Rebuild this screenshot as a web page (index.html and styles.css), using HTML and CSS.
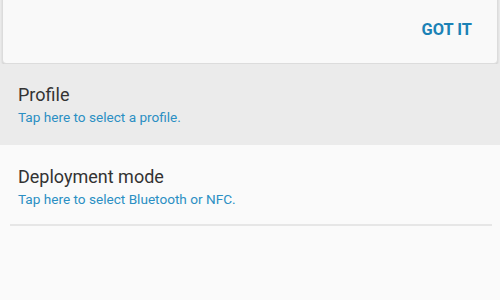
FILE: index.html
```
<!DOCTYPE html>
<html>
<head>
<meta charset="UTF-8">
<title>Settings</title>
<link rel="stylesheet" href="styles.css">
</head>
<body>
	<div class="top-area">
		<div class="tip-card">
			<div class="tip-actions">
				<span class="tip-button">GOT IT</span>
			</div>
		</div>
		<div class="pref-item pref-item-pressed">
			<div class="pref-title">Profile</div>
			<div class="pref-summary">Tap here to select a profile.</div>
		</div>
	</div>
	<div class="pref-item">
		<div class="pref-title">Deployment mode</div>
		<div class="pref-summary">Tap here to select Bluetooth or NFC.</div>
	</div>
	<div class="pref-divider"></div>
</body>
</html>
```

FILE: styles.css
```
body {
	margin: 0;
	background-color: #fafafa;
	font-family: Roboto, "Liberation Sans", Arial, sans-serif;
	overflow: hidden;
}

.top-area {
	background-color: #ebebeb;
	padding: 0 2px 0 2px;
}

.tip-card {
	margin-top: -10px;
	height: 74px;
	box-sizing: border-box;
	background-color: #f9f9f9;
	border: 1px solid #dcdcdc;
	border-radius: 4px;
	box-shadow: 0 1px 2px rgba(0, 0, 0, 0.12);
	display: flex;
	flex-direction: column;
	justify-content: flex-start;
}

.tip-actions {
	display: flex;
	justify-content: flex-end;
	padding: 29px 25px 0 0;
}

.tip-button {
	font-size: 16.4px;
	line-height: 20px;
	font-weight: bold;
	color: #1b82b6;
}

.pref-item {
	padding: 21px 18px 16px 18px;
}

.top-area .pref-item {
	margin: 0 -2px;
	padding-top: 20px;
	padding-bottom: 19px;
}

.pref-item-pressed {
	background-color: #ebebeb;
}

.pref-title {
	font-size: 18px;
	line-height: 22px;
	color: #333333;
}

.pref-summary {
	margin-top: 3px;
	font-size: 13.6px;
	line-height: 17px;
	color: #2b8fc3;
}

.pref-divider {
	height: 2px;
	margin: 0 8px 0 10px;
	background-color: #e6e6e6;
}
```
